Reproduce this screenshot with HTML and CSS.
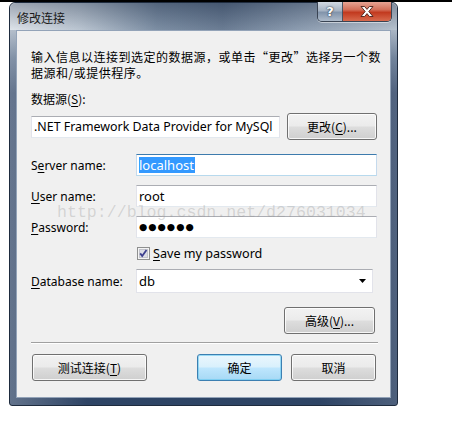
FILE: index.html
```html
<!DOCTYPE html>
<html lang="zh-CN">
<head>
<meta charset="utf-8">
<title>修改连接</title>
<link rel="stylesheet" href="styles.css">
</head>
<body>
<div class="page">
  <div class="window">
    <div class="titlebar">
      <span class="title">修改连接</span>
      <div class="caption-btns">
        <div class="cbtn help">?</div>
        <div class="cbtn close">
          <svg width="14" height="11" viewBox="0 0 14 11"><path d="M1 0.5h3.6l2.4 2.9 2.4-2.9h3.6l-4.2 5 4.2 5h-3.6l-2.4-2.9-2.4 2.9h-3.6l4.2-5z" fill="#fff" stroke="#4a2018" stroke-width="0.9" stroke-linejoin="round"/></svg>
        </div>
      </div>
    </div>
    <div class="client">
      <p class="desc">输入信息以连接到选定的数据源，或单击“更改”选择另一个数<br>据源和/或提供程序。</p>
      <div class="src-label">数据源(<u>S</u>):</div>
      <div class="src-row">
        <div class="tb readonly">.NET Framework Data Provider for MySQl</div>
        <button class="btn change">更改(<u>C</u>)...</button>
      </div>
      <div class="field first">
        <span class="lbl">S<u>e</u>rver name:</span>
        <div class="tb focus"><span class="sel">localhost</span></div>
      </div>
      <div class="field">
        <span class="lbl"><u>U</u>ser name:</span>
        <div class="tb">root</div>
      </div>
      <div class="field">
        <span class="lbl"><u>P</u>assword:</span>
        <div class="tb pw">●●●●●●</div>
      </div>
      <div class="check-row">
        <span class="chk">
          <svg width="13" height="13" viewBox="0 0 13 13"><rect x="0.5" y="0.5" width="12" height="12" fill="#f4f4f4" stroke="#8e8f8f"/><rect x="2.5" y="2.5" width="8" height="8" fill="#dcdde6" stroke="#c3c4cc"/><path d="M3.2 6.4l2 2.6 4.3-6" fill="none" stroke="#3d3f8f" stroke-width="1.8"/></svg>
        </span>
        <span class="chk-text"><u>S</u>ave my password</span>
      </div>
      <div class="field db">
        <span class="lbl"><u>D</u>atabase name:</span>
        <div class="combo"><span>db</span><svg width="8" height="5" viewBox="0 0 8 5"><path d="M0 0h7l-3.5 4z" fill="#000"/></svg></div>
      </div>
      <div class="adv-row">
        <button class="btn adv">高级(<u>V</u>)...</button>
      </div>
      <div class="sep"></div>
      <div class="btn-row">
        <button class="btn test">测试连接(<u>T</u>)</button>
        <div class="right-btns">
          <button class="btn ok">确定</button>
          <button class="btn">取消</button>
        </div>
      </div>
      <div class="watermark">http://blog.csdn.net/d276031034</div>
    </div>
  </div>
</div>
</body>
</html>
```

FILE: styles.css
```css
html, body {
  margin: 0;
  padding: 0;
}
body {
  background: #fff;
  border-top: 2px solid #000;
  font-family: "Noto Sans", "Noto Sans CJK SC", sans-serif;
  font-size: 12px;
  color: #000;
  width: 452px;
  height: 423px;
  overflow: hidden;
}
.page {
  padding-left: 9px;
}
.window {
  box-sizing: border-box;
  width: 389px;
  height: 404px;
  border: 1px solid #1e2b3e;
  border-radius: 6px 6px 3px 3px;
  padding: 0 6px 7px;
  display: flex;
  flex-direction: column;
  background:
    linear-gradient(to right, rgba(255,255,255,0.25), rgba(255,255,255,0) 20%, rgba(255,255,255,0) 80%, rgba(255,255,255,0.15)),
    linear-gradient(to bottom, #c6ced8 0, #9aa8b9 28px, #5a6f8b 55px, #34496a 90px, #2e4465 100%);
}
.titlebar {
  height: 27px;
  display: flex;
  justify-content: space-between;
  align-items: flex-start;
  margin: 0 -6px;
  padding: 0 6px 0 7px;
  border-radius: 6px 6px 0 0;
  background:
    linear-gradient(to bottom, rgba(30,45,70,0.35), rgba(200,210,222,0.15)),
    linear-gradient(to right, #e2e7ec 0%, #b8c3cf 18%, #6f8299 38%, #5b6e87 55%, #8394a9 75%, #b4bfcb 100%);
}
.title {
  font-family: "Noto Sans CJK SC", sans-serif;
  font-size: 12px;
  line-height: 16px;
  margin-top: 7px;
  color: #1a1a1a;
}
.caption-btns {
  display: flex;
  margin-top: -1px;
  margin-right: -1px;
  height: 19px;
  border: 1px solid #3a4453;
  border-top: none;
  border-radius: 0 0 5px 5px;
  overflow: hidden;
  box-shadow: 0 1px 0 rgba(255,255,255,0.5);
}
.cbtn {
  display: flex;
  align-items: center;
  justify-content: center;
  height: 19px;
}
.help {
  width: 24px;
  border-right: 1px solid #4a5361;
  background: linear-gradient(to bottom, #d3dae3 0, #a6b3c3 45%, #8294ab 55%, #aebbca 100%);
  color: #fff;
  font-family: "DejaVu Sans", sans-serif;
  font-weight: bold;
  font-size: 13px;
  text-shadow: 0 0 2px #2b3646, 0 0 1px #2b3646;
}
.close {
  width: 48px;
  background: linear-gradient(to bottom, #e7a494 0, #d4705a 40%, #c23a1f 55%, #d86a4d 100%);
}
.client {
  position: relative;
  flex: 1;
  background: #f0f0f0;
  border: 1px solid #93a3b8;
  padding: 18px 13px 15px 14px;
  display: flex;
  flex-direction: column;
}
.desc {
  margin: 0;
  font-family: "Noto Sans CJK SC", sans-serif;
  line-height: 16px;
  white-space: nowrap;
  letter-spacing: 0.5px;
}
.src-label {
  margin-top: 10px;
  line-height: 16px;
  font-family: "Noto Sans CJK SC", sans-serif;
}
.src-row {
  margin-top: 6px;
  height: 27px;
  display: flex;
  align-items: center;
  gap: 7px;
}
.tb {
  box-sizing: border-box;
  height: 22px;
  background: #fff;
  border: 1px solid #e2e3ea;
  border-top-color: #abadb3;
  border-bottom-color: #e3e9ef;
  padding: 0 2px;
  line-height: 20px;
  white-space: nowrap;
  overflow: hidden;
  flex: 1;
  font-size: 13px;
}
.tb.readonly {
  width: 249px;
  flex: none;
  font-size: 12.4px;
}
.tb.focus {
  border-color: #c5daed;
  border-top-color: #3d7bad;
  border-bottom-color: #b7d9ed;
}
.sel {
  display: inline-block;
  background: #3399ff;
  color: #fff;
  line-height: 16px;
  padding-right: 1px;
}
.btn {
  box-sizing: border-box;
  height: 27px;
  border: 1px solid #707070;
  border-radius: 3px;
  background: linear-gradient(to bottom, #f2f2f2 0, #ebebeb 48%, #dddddd 52%, #cfcfcf 100%);
  box-shadow: inset 0 0 0 1px rgba(255,255,255,0.8);
  font-family: "Noto Sans CJK SC", sans-serif;
  font-size: 12px;
  color: #000;
  padding: 0;
  margin: 0;
}
.btn.change {
  width: 90px;
}
.field {
  display: flex;
  align-items: center;
  margin-top: 9px;
  height: 22px;
}
.field.first {
  margin-top: 14px;
}
.lbl {
  width: 105px;
  flex: none;
  font-size: 12px;
}
.check-row {
  margin-top: 7px;
  height: 16px;
  display: flex;
  align-items: center;
  padding-left: 106px;
}
.chk {
  display: flex;
  width: 13px;
  height: 13px;
}
.chk-text {
  margin-left: 3px;
  font-size: 12.6px;
}
.field.db {
  margin-top: 8px;
  height: 24px;
}
.combo {
  box-sizing: border-box;
  width: 237px;
  height: 24px;
  background: #fff;
  border: 1px solid #e2e3ea;
  border-top-color: #abadb3;
  display: flex;
  align-items: center;
  justify-content: space-between;
  padding: 0 5px 0 2px;
  font-size: 13px;
}
.pw {
  font-family: "DejaVu Sans", sans-serif;
  font-size: 9.5px;
  letter-spacing: 1px;
}
.adv-row {
  margin-top: 14px;
  display: flex;
  justify-content: flex-end;
  padding-right: 2px;
}
.btn.adv {
  width: 91px;
}
.sep {
  margin-top: 8px;
  margin-right: -1px;
  height: 1px;
  background: #a0a0a0;
  border-bottom: 1px solid #fff;
}
.btn-row {
  margin-top: 10px;
  display: flex;
  justify-content: space-between;
  padding-left: 1px;
  padding-right: 1px;
}
.btn.test {
  width: 115px;
}
.right-btns {
  display: flex;
  gap: 9px;
}
.right-btns .btn {
  width: 85px;
}
.btn.ok {
  border-color: #3c7fb1;
  background: linear-gradient(to bottom, #eaf6fd 0, #d9f0fc 48%, #bee6fd 52%, #a7d9f5 100%);
  box-shadow: inset 0 0 0 1px rgba(100,200,240,0.6);
}
u {
  text-decoration: underline;
  text-underline-offset: 2px;
}
.watermark {
  position: absolute;
  left: 40px;
  top: 172px;
  font-family: "Liberation Mono", monospace;
  font-size: 16.6px;
  color: rgba(150,150,150,0.32);
  white-space: nowrap;
  pointer-events: none;
}
```
